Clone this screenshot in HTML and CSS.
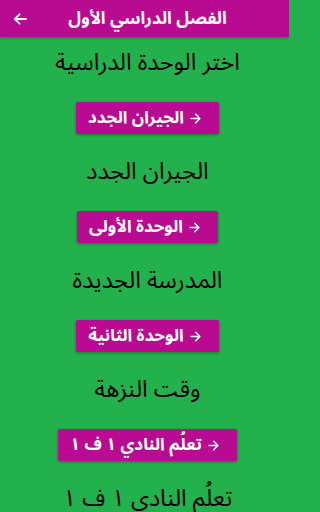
FILE: index.html
```html
<!DOCTYPE html>
<html lang="ar">
<head>
<meta charset="utf-8">
<link rel="stylesheet" href="styles.css">
</head>
<body>
<div class="screen" dir="rtl">
<header class="appbar">
  <h1 class="appbar-title">الفصل الدراسي الأول</h1>
  <span class="appbar-back" aria-label="رجوع">
    <svg width="14" height="12" viewBox="0 0 14 12"><path d="M13 6H1.8M6.6 1.3L1.8 6l4.8 4.7" fill="none" stroke="#fff" stroke-width="1.8" stroke-linecap="round" stroke-linejoin="round"/></svg>
  </span>
</header>
<main class="content">
  <h2 class="unit-title">اختر الوحدة الدراسية</h2>
  <a class="unit-btn"><svg class="btn-arrow" width="11" height="11" viewBox="0 0 10 10"><path d="M1 5h8M5.2 1.2L9 5 5.2 8.8" fill="none" stroke="#fff" stroke-width="1.4" stroke-linecap="round" stroke-linejoin="round"/></svg><span>الجيران الجدد</span></a>
  <h2 class="unit-title">الجيران الجدد</h2>
  <a class="unit-btn"><svg class="btn-arrow" width="11" height="11" viewBox="0 0 10 10"><path d="M1 5h8M5.2 1.2L9 5 5.2 8.8" fill="none" stroke="#fff" stroke-width="1.4" stroke-linecap="round" stroke-linejoin="round"/></svg><span>الوحدة الأولى</span></a>
  <h2 class="unit-title">المدرسة الجديدة</h2>
  <a class="unit-btn"><svg class="btn-arrow" width="11" height="11" viewBox="0 0 10 10"><path d="M1 5h8M5.2 1.2L9 5 5.2 8.8" fill="none" stroke="#fff" stroke-width="1.4" stroke-linecap="round" stroke-linejoin="round"/></svg><span>الوحدة الثانية</span></a>
  <h2 class="unit-title">وقت النزهة</h2>
  <a class="unit-btn"><svg class="btn-arrow" width="11" height="11" viewBox="0 0 10 10"><path d="M1 5h8M5.2 1.2L9 5 5.2 8.8" fill="none" stroke="#fff" stroke-width="1.4" stroke-linecap="round" stroke-linejoin="round"/></svg><span>تعلُم النادي ١ ف ١</span></a>
  <h2 class="unit-title">تعلُم النادي ١ ف ١</h2>
</main>
</div>
</body>
</html>
```
FILE: styles.css
```css
html, body {
  margin: 0;
  padding: 0;
  background: #22b14c;
}
.screen {
  width: 289px;
  height: 512px;
  overflow: hidden;
  background: #22b14c;
  font-family: "Noto Sans Arabic", "DejaVu Sans", sans-serif;
}
.appbar {
  height: 37px;
  background: #b80b92;
  display: flex;
  align-items: center;
  padding: 0 13px;
  box-sizing: border-box;
  box-shadow: 0 1px 3px rgba(0,0,0,0.3);
  position: relative;
}
.appbar-title {
  flex: 1;
  margin: 0;
  color: #fff;
  font-size: 17.4px;
  line-height: 37px;
  height: 37px;
  font-weight: bold;
  text-align: center;
  padding-right: 8px;
  white-space: nowrap;
}
.appbar-back {
  display: flex;
  width: 14px;
  height: 12px;
}
.content {
  display: flex;
  flex-direction: column;
  align-items: center;
  padding-top: 10px;
  padding-left: 6px;
}
.unit-title {
  margin: 0 0 24px;
  height: 31px;
  line-height: 31px;
  font-size: 23.5px;
  font-weight: normal;
  color: #000;
  white-space: nowrap;
}
.unit-btn {
  display: inline-flex;
  align-items: center;
  gap: 6px;
  height: 32px;
  padding: 0 18px 0 12px;
  margin-bottom: 22px;
  background: #b80b92;
  color: #fff;
  font-size: 17px;
  line-height: 32px;
  font-weight: bold;
  border-radius: 2px;
  box-shadow: 0 1px 3px rgba(0,0,0,0.35);
  box-sizing: border-box;
  white-space: nowrap;
}
.btn-arrow {
  flex: none;
}
```
